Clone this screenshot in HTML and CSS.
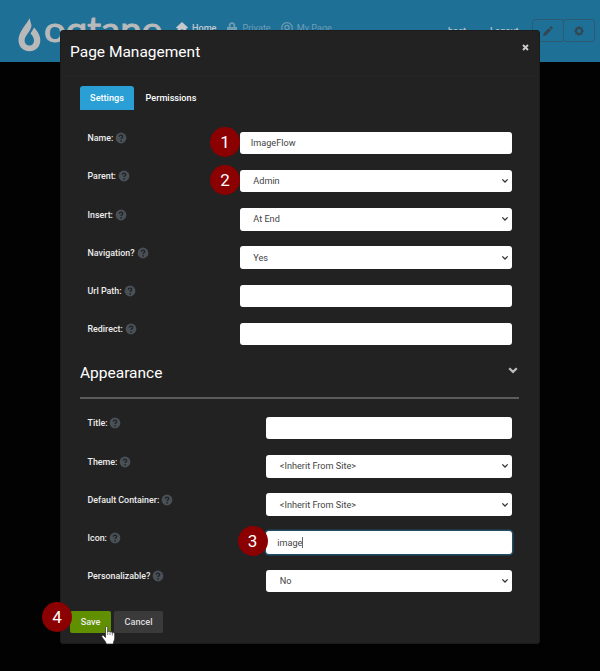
FILE: index.html
```
<!DOCTYPE html>
<html lang="en">
<head>
<meta charset="utf-8">
<title>Page Management</title>
<link rel="stylesheet" href="styles.css">
</head>
<body>
<svg class="defs" width="0" height="0" aria-hidden="true">
  <symbol id="help" viewBox="0 0 12 12"><circle cx="6" cy="6" r="5.4" fill="#495057"/><path d="M4.3 4.7C4.4 2.5 7.7 2.6 7.7 4.6C7.7 5.9 6.1 5.8 6.1 7" fill="none" stroke="#222" stroke-width="1.3"/><circle cx="6.1" cy="8.8" r=".85" fill="#222"/></symbol>
  <symbol id="chev" viewBox="0 0 8 6"><path d="M1.3 1.4L4 4L6.7 1.4" fill="none" stroke="#333" stroke-width="1.3"/></symbol>
</svg>
<header class="topbar">
  <svg class="logo" width="150" height="60" viewBox="0 0 150 60">
    <path d="M11.5 18C10 23 .5 31 .5 40C.5 47 5.500 51.300 11.500 51.300C17.500 51.300 22.300 47 22.300 40C22.300 35.500 19.500 31.200 16.200 27.500L12.500 33.500C14.800 36 16 38.300 16 40.500C16 43.500 14 45.500 11.500 45.500C8.500 45.500 6.600 43.300 6.600 40.500C6.600 36 12.800 31.500 13.500 25.500Z"/>
    <text x="26" y="42" textLength="118" lengthAdjust="spacingAndGlyphs">oqtane</text>
  </svg>
  <nav class="nav">
    <a class="active"><svg width="12" height="11" viewBox="0 0 12 11"><path d="M6 0L12 5.400L11 6.500L10.300 6V11H7.300V7.500H4.700V11H1.700V6L1 6.500L0 5.400Z"/></svg>Home</a>
    <a class="private"><svg width="10" height="12" viewBox="0 0 10 12"><path fill-rule="evenodd" d="M0 5H1.700V3.500C1.700-1 8.300-1 8.300 3.500V5H10V12H0ZM3.500 5H6.500V3.500C6.500 1.400 3.500 1.400 3.500 3.500Z"/></svg>Private</a>
    <a class="mypage"><svg width="12" height="12" viewBox="0 0 12 12" fill="none"><g fill="none" stroke="currentColor" stroke-width="1.200"><circle cx="6" cy="6" r="5.300"/><circle cx="6" cy="5.500" r="2.200"/><path d="M2.500 9.800C4 8.200 8 8.200 9.500 9.800"/></g></svg>My Page</a>
  </nav>
  <div class="account"><span>host</span><span>Logout</span></div>
  <div class="tools">
    <span><svg width="10" height="10" viewBox="0 0 10 10"><path d="M0 10L.7 7.200L5.700 2.200L7.900 4.400L2.800 9.400ZM6.400 1.500L7.500 .4Q8 0 8.500 .4L9.600 1.500Q10 2 9.600 2.500L8.500 3.700Z"/></svg></span>
    <span><svg width="10" height="10" viewBox="-5 -5 10 10"><circle r="2.900" fill="none" stroke="#34464f" stroke-width="1.800"/><path d="M0-4.700V-3M0 4.700V3M-4.700 0H-3M4.700 0H3M-3.300-3.300L-2.300-2.300M3.300 3.300L2.300 2.300M-3.300 3.300L-2.300 2.300M3.300-3.300L2.300-2.300" stroke="#34464f" stroke-width="1.700"/></svg></span>
  </div>
</header>
<main class="modal">
  <div class="modal-head"><h1>Page Management</h1><svg class="close" width="7" height="7" viewBox="0 0 7 7"><path d="M1 1L6 6M6 1L1 6" stroke="#ccc" stroke-width="1.900"/></svg></div>
  <div class="tabs"><span class="tab on">Settings</span><span class="tab">Permissions</span></div>
  <section class="form">
    <div class="row"><label>Name:<svg><use href="#help"/></svg></label><div class="field">ImageFlow<b class="step">1</b></div></div>
    <div class="row"><label>Parent:<svg><use href="#help"/></svg></label><div class="field select">Admin<svg><use href="#chev"/></svg><b class="step">2</b></div></div>
    <div class="row"><label>Insert:<svg><use href="#help"/></svg></label><div class="field select">At End<svg><use href="#chev"/></svg></div></div>
    <div class="row"><label>Navigation?<svg><use href="#help"/></svg></label><div class="field select">Yes<svg><use href="#chev"/></svg></div></div>
    <div class="row"><label>Url Path:<svg><use href="#help"/></svg></label><div class="field"></div></div>
    <div class="row"><label>Redirect:<svg><use href="#help"/></svg></label><div class="field"></div></div>
  </section>
  <div class="section-head"><h2>Appearance</h2><svg width="10" height="7" viewBox="0 0 10 7"><path d="M1.200 1.200L5 4.900L8.800 1.200" fill="none" stroke="#bbb" stroke-width="2.300"/></svg></div>
  <section class="form narrow">
    <div class="row"><label>Title:<svg><use href="#help"/></svg></label><div class="field"></div></div>
    <div class="row"><label>Theme:<svg><use href="#help"/></svg></label><div class="field select">&lt;Inherit From Site&gt;<svg><use href="#chev"/></svg></div></div>
    <div class="row"><label>Default Container:<svg><use href="#help"/></svg></label><div class="field select">&lt;Inherit From Site&gt;<svg><use href="#chev"/></svg></div></div>
    <div class="row"><label>Icon:<svg><use href="#help"/></svg></label><div class="field focus">image<i class="caret"></i><b class="step">3</b></div></div>
    <div class="row"><label>Personalizable?<svg><use href="#help"/></svg></label><div class="field select">No<svg><use href="#chev"/></svg></div></div>
  </section>
  <div class="actions">
    <span class="btn save">Save<b class="step">4</b>
      <svg class="pointer" width="15" height="19" viewBox="0 0 15 19"><path d="M4.500 1.500C4.500 .2 6.700 .2 6.700 1.500V6C7 4.800 9 5 9 6.300C9.500 5.300 11.300 5.600 11.300 7C12 6.200 13.700 6.700 13.700 8V12C13.700 14 12.500 15 12.300 18H5.300C5 15.500 2.500 13.500 .9 11C.2 9.700 1.700 8.700 2.700 9.700L4.500 11.500Z" fill="#fff" stroke="#222" stroke-width=".7"/><path d="M6.700 6V9M9 6.500V9M11.300 7V9.500" stroke="#222" stroke-width=".6"/></svg></span>
    <span class="btn">Cancel</span>
  </div>
</main>
</body>
</html>
```
FILE: styles.css
```
* { box-sizing: border-box; }
body { margin: 0; width: 600px; height: 671px; overflow: hidden; background: #020202; font: 9.15px/12px Roboto, sans-serif; color: #eee; }
.defs { position: absolute; }
.topbar { height: 62px; background: #1f7097; display: flex; align-items: flex-start; }
.logo { margin-left: 18px; fill: #b9b9b9; flex: none; }
.logo text { font: 35px Lato, sans-serif; stroke: #b9b9b9; stroke-width: 1; }
.nav { display: flex; margin: 22px 0 0 8px; width: 272px; color: #6e9db5; }
.nav a { display: flex; gap: 4px; height: 12px; white-space: nowrap; }
.nav svg { fill: currentColor; }
.nav .active { color: #c3c9cc; font-weight: 500; }
.nav .private { margin-left: 10px; gap: 6px; }
.nav .mypage { margin-left: 10px; }
.account { display: flex; gap: 24px; width: 84px; margin-top: 25px; color: #b6c3ca; font-weight: 500; }
.tools { display: flex; margin-top: 19px; }
.tools span { width: 32px; height: 23px; border: 1px solid #2b5b73; border-radius: 3px; display: flex; align-items: center; justify-content: center; fill: #34464f; }
.tools span + span { margin-left: -1px; }
.modal { position: absolute; left: 59.500px; top: 30px; width: 480px; height: 613.500px; background: #222; border-radius: 3px; border: 1px solid #1c1c1c; }
.modal-head { height: 45px; border-bottom: 1px solid #252525; display: flex; justify-content: space-between; padding: 10px 9.500px 0 9.500px; }
h1, h2 { margin: 0; font-weight: 400; font-size: 15.500px; line-height: 22px; color: #fff; }
.close { margin-top: 3px; }
.tabs { display: flex; margin: 10px 19.500px 0; height: 24px; }
.tab { padding: 0 11.500px; line-height: 24px; font-weight: 500; color: #fff; }
.tab.on { width: 54px; padding: 0; text-align: center; background: #2a9fd6; border-radius: 3px 3px 0 0; }
.form { margin: 21.800px 27px 0; }
.row { height: 38.200px; display: grid; grid-template-columns: 152px 272px; }
.narrow .row { grid-template-columns: 178.500px 245.500px; }
label { display: flex; font-size: 8.900px; font-weight: 500; margin-top: .5px; align-items: center; height: 12px; gap: 2px; }
label svg { width: 12px; height: 12px; }
.field { position: relative; height: 22.500px; border-radius: 3px; background: #fff; color: #444; padding: 0 11.300px; display: flex; align-items: center; }
.select { padding-left: 13.800px; }
.select svg { width: 8px; height: 6px; margin-left: auto; margin-right: -8.800px; }
.focus { box-shadow: 0 0 0 1.500px #204e66; }
.caret { width: 1px; height: 11px; background: #666; }
.step { position: absolute; left: -29.500px; top: -5px; width: 30px; height: 30px; border-radius: 50%; background: #8b0000; color: #fff; font: 17px/30px Roboto, sans-serif; text-align: center; }
.narrow .step { left: -28.500px; }
.section-head { margin: 0 19.500px; height: 38.500px; border-bottom: 2px solid #5c5c5c; display: flex; justify-content: space-between; padding-right: 1.500px; }
.section-head h2 { margin-top: 1.300px; }
.section-head svg { margin-top: 6.500px; }
.narrow { margin-top: 17.500px; }
.actions { display: flex; gap: 3px; margin: 3px 9.500px 0; }
.btn { position: relative; width: 49px; height: 22px; line-height: 22px; background: #3a3a3a; border-radius: 2px; text-align: center; font-weight: 500; color: #ddd; }
.save { width: 41px; background: #609000; color: #eee; }
.save .step { left: -28px; top: -9px; }
.pointer { position: absolute; left: 31px; top: 15px; }
```
